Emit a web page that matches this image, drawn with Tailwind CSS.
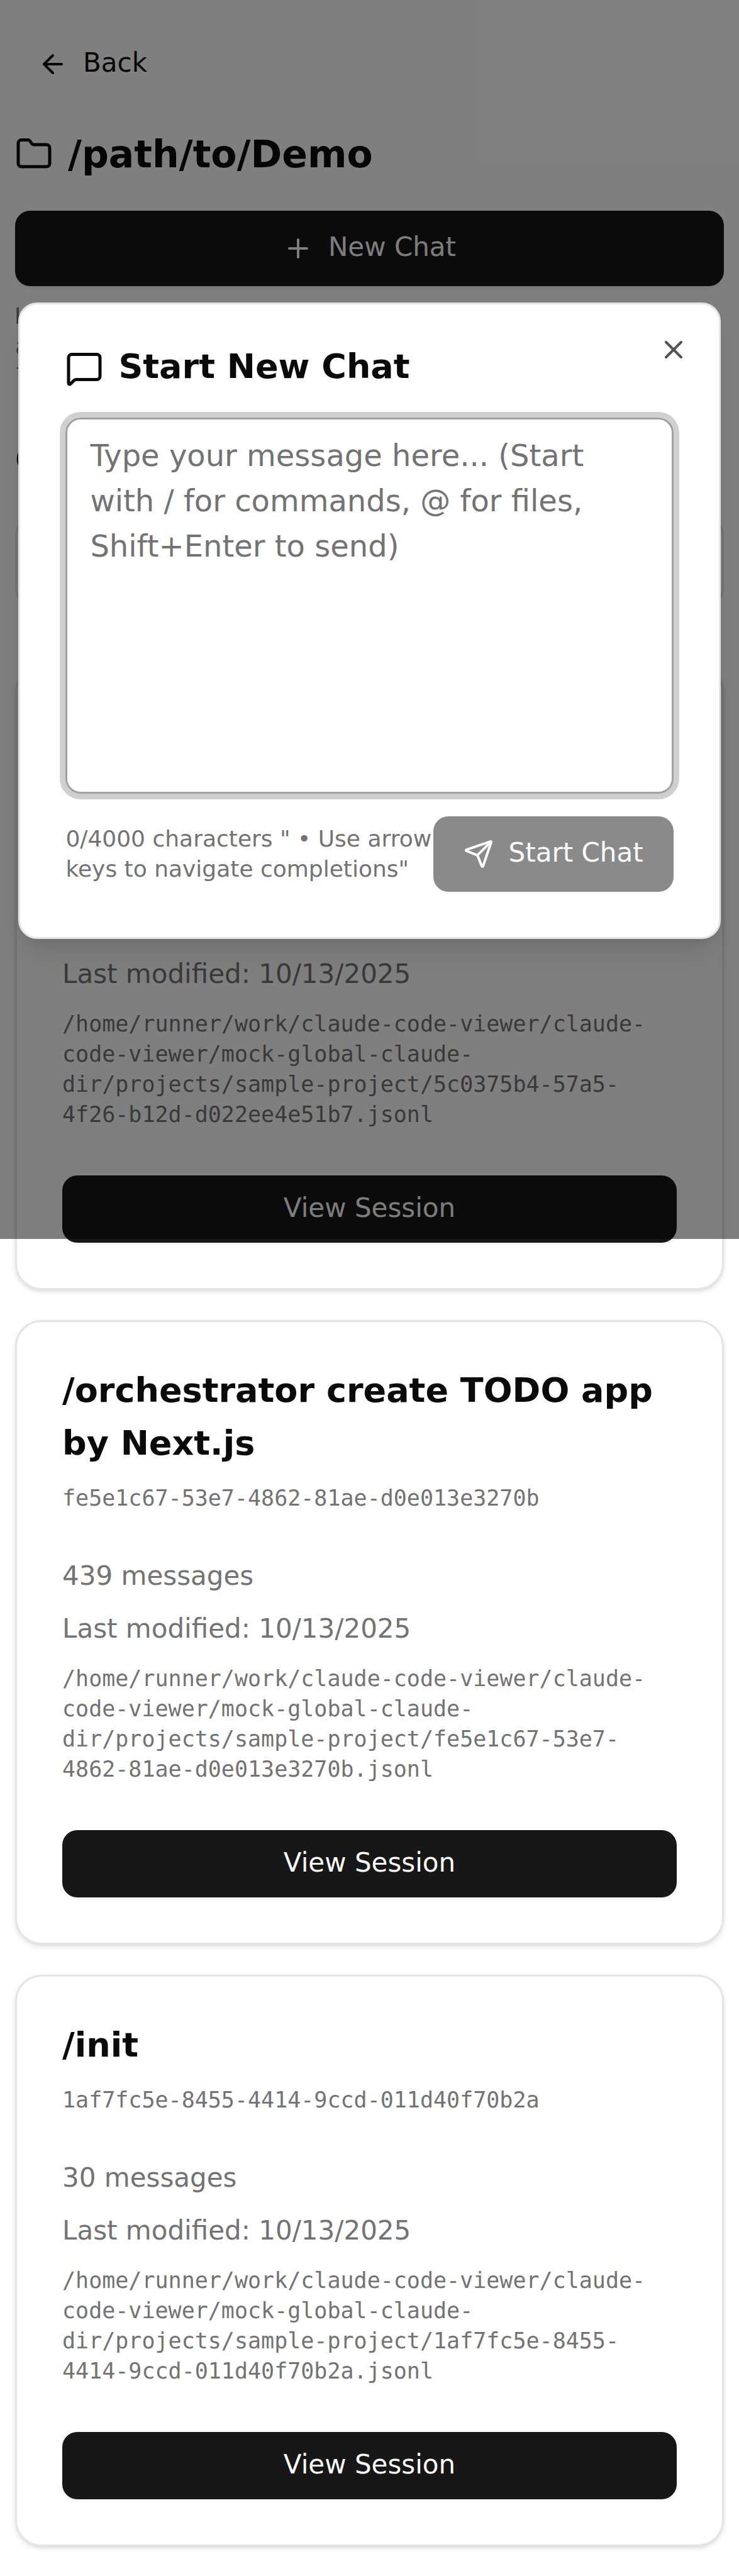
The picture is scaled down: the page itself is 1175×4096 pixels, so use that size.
<!DOCTYPE html>
<html lang="en">
<head>
<meta charset="utf-8">
<meta name="viewport" content="width=device-width, initial-scale=1">
<title>/path/to/Demo</title>
<script src="https://cdn.jsdelivr.net/npm/@tailwindcss/browser@4"></script>
</head>
<body class="relative bg-white font-['DejaVu_Sans',sans-serif] text-[42px] leading-[60px] text-[#0a0a0a]">

<main class="px-6 pt-12 pb-12">
  <header>
    <a href="#" class="flex h-[107px] w-fit items-center gap-6 px-9">
      <svg class="size-12" viewBox="0 0 24 24" fill="none" stroke="currentColor" stroke-width="2" stroke-linecap="round" stroke-linejoin="round" aria-hidden="true"><path d="m12 19-7-7 7-7"/><path d="M19 12H5"/></svg>
      <span class="pb-1">Back</span>
    </a>
    <h1 class="mt-12 flex items-center gap-6 text-[60px] leading-[84px] font-bold">
      <svg class="size-[60px]" viewBox="0 0 24 24" fill="none" stroke="currentColor" stroke-width="2" stroke-linecap="round" stroke-linejoin="round" aria-hidden="true"><path d="M20 20a2 2 0 0 0 2-2V8a2 2 0 0 0-2-2h-7.900a2 2 0 0 1-1.690-.900L9.600 3.900A2 2 0 0 0 7.930 3H4a2 2 0 0 0-2 2v13a2 2 0 0 0 2 2Z"/></svg>
      /path/to/Demo
    </h1>
    <button type="button" class="mt-12 flex h-[120px] w-full items-center justify-center gap-6 rounded-3xl bg-[#171717] text-[#fafafa] shadow-[0_3px_6px_rgb(0_0_0/0.05)]">
      <svg class="size-12" viewBox="0 0 24 24" fill="none" stroke="currentColor" stroke-width="2" stroke-linecap="round" stroke-linejoin="round" aria-hidden="true"><path d="M5 12h14"/><path d="M12 5v14"/></svg>
      <span class="pb-1">New Chat</span>
    </button>
    <p class="mt-6 font-['DejaVu_Sans_Mono',monospace] text-[35px] leading-[48px] break-all text-[#737373]">History File: /home/runner/work/claude-code-viewer/cl<wbr>aude-code-viewer/mock-global-claude-dir/projects/samp<wbr>le-project</p>
  </header>

  <h2 class="mt-[66px] text-[54px] leading-[84px] font-bold">Conversations (3)</h2>
  <button type="button" class="mt-12 flex h-[144px] w-full items-center rounded-[30px] border-[3px] border-[#e5e5e5] px-9">Filters</button>

  <section class="mt-[93px] flex flex-col gap-12">
    <article class="rounded-[42px] border-[3px] border-[#e5e5e5] bg-white px-[72px] pt-[67px] pb-[72px] shadow-[0_3px_9px_rgb(0_0_0/0.1),0_3px_6px_-3px_rgb(0_0_0/0.1)]">
      <h3 class="text-[54px] leading-[84px] font-bold">/orchestrator create TODO app by Next.js</h3>
      <p class="mt-[21px] font-['DejaVu_Sans_Mono',monospace] text-[35px] leading-[48px] text-[#737373]">5c0375b4-57a5-4f26-b12d-d022ee4e51b7</p>
      <p class="mt-[70px] text-[#737373]">60 messages</p>
      <p class="mt-6 text-[#737373]">Last modified: 10/13/2025</p>
      <p class="mt-[25px] font-['DejaVu_Sans_Mono',monospace] text-[35px] leading-[48px] text-[#737373]">/home/runner/work/claude-code-viewer/claude-<wbr>code-viewer/mock-global-claude-<br>dir/projects/sample-project/5c0375b4-57a5-<wbr>4f26-b12d-d022ee4e51b7.jsonl</p>
      <a href="#" class="mt-[73px] flex h-[107px] items-center justify-center rounded-3xl bg-[#171717] text-[#fafafa] shadow-[0_3px_6px_rgb(0_0_0/0.05)]"><span class="pb-1">View Session</span></a>
    </article>

    <article class="rounded-[42px] border-[3px] border-[#e5e5e5] bg-white px-[72px] pt-[67px] pb-[72px] shadow-[0_3px_9px_rgb(0_0_0/0.1),0_3px_6px_-3px_rgb(0_0_0/0.1)]">
      <h3 class="text-[54px] leading-[84px] font-bold">/orchestrator create TODO app by Next.js</h3>
      <p class="mt-[21px] font-['DejaVu_Sans_Mono',monospace] text-[35px] leading-[48px] text-[#737373]">fe5e1c67-53e7-4862-81ae-d0e013e3270b</p>
      <p class="mt-[70px] text-[#737373]">439 messages</p>
      <p class="mt-6 text-[#737373]">Last modified: 10/13/2025</p>
      <p class="mt-[25px] font-['DejaVu_Sans_Mono',monospace] text-[35px] leading-[48px] text-[#737373]">/home/runner/work/claude-code-viewer/claude-<wbr>code-viewer/mock-global-claude-<br>dir/projects/sample-project/fe5e1c67-53e7-<wbr>4862-81ae-d0e013e3270b.jsonl</p>
      <a href="#" class="mt-[73px] flex h-[107px] items-center justify-center rounded-3xl bg-[#171717] text-[#fafafa] shadow-[0_3px_6px_rgb(0_0_0/0.05)]"><span class="pb-1">View Session</span></a>
    </article>

    <article class="rounded-[42px] border-[3px] border-[#e5e5e5] bg-white px-[72px] pt-[67px] pb-[72px] shadow-[0_3px_9px_rgb(0_0_0/0.1),0_3px_6px_-3px_rgb(0_0_0/0.1)]">
      <h3 class="text-[54px] leading-[84px] font-bold">/init</h3>
      <p class="mt-[21px] font-['DejaVu_Sans_Mono',monospace] text-[35px] leading-[48px] text-[#737373]">1af7fc5e-8455-4414-9ccd-011d40f70b2a</p>
      <p class="mt-[70px] text-[#737373]">30 messages</p>
      <p class="mt-6 text-[#737373]">Last modified: 10/13/2025</p>
      <p class="mt-[25px] font-['DejaVu_Sans_Mono',monospace] text-[35px] leading-[48px] text-[#737373]">/home/runner/work/claude-code-viewer/claude-<wbr>code-viewer/mock-global-claude-<br>dir/projects/sample-project/1af7fc5e-8455-<wbr>4414-9ccd-011d40f70b2a.jsonl</p>
      <a href="#" class="mt-[73px] flex h-[107px] items-center justify-center rounded-3xl bg-[#171717] text-[#fafafa] shadow-[0_3px_6px_rgb(0_0_0/0.05)]"><span class="pb-1">View Session</span></a>
    </article>
  </section>
</main>

<!-- Backdrop covers the first screen; the dialog sits at its centre -->
<div class="absolute inset-x-0 top-0 flex h-[1970px] items-center justify-center bg-black/50 pt-1">
  <div role="dialog" aria-modal="true" aria-labelledby="dialog-title" class="relative w-[95%] rounded-[30px] border-[3px] border-[#e5e5e5] bg-white p-[72px] shadow-[0_30px_45px_-9px_rgb(0_0_0/0.1),0_12px_18px_-12px_rgb(0_0_0/0.1)]">
    <h2 id="dialog-title" class="flex items-start gap-6 text-[54px] leading-[54px] font-bold">
      <svg class="size-[60px]" viewBox="0 0 24 24" fill="none" stroke="currentColor" stroke-width="2" stroke-linecap="round" stroke-linejoin="round" aria-hidden="true"><path d="M22 17a2 2 0 0 1-2 2H6.828a2 2 0 0 0-1.414.586l-2.202 2.202A.71.71 0 0 1 2 21.286V5a2 2 0 0 1 2-2h16a2 2 0 0 1 2 2z"/></svg>
      Start New Chat
    </h2>
    <form class="mt-12">
      <textarea aria-label="Message" placeholder="Type your message here... (Start with / for commands, @ for files, Shift+Enter to send)" class="block h-[598px] w-full resize-none rounded-3xl border-[3px] border-[#a1a1a1] px-9 py-[21px] text-5xl leading-[72px] shadow-[0_0_0_9px_rgb(161_161_161/0.5),0_3px_6px_rgb(0_0_0/0.05)] outline-none placeholder:text-[#737373]"></textarea>
      <div class="mt-9 flex items-center justify-between">
        <p class="flex-1 text-4xl leading-[48px] text-[#737373]">0/4000 characters " • Use arrow keys to navigate completions"</p>
        <button type="submit" disabled class="flex h-[120px] shrink-0 items-center gap-6 rounded-3xl bg-[#171717] px-12 text-[#fafafa] opacity-50 shadow-[0_3px_6px_rgb(0_0_0/0.05)]">
          <svg class="size-12" viewBox="0 0 24 24" fill="none" stroke="currentColor" stroke-width="2" stroke-linecap="round" stroke-linejoin="round" aria-hidden="true"><path d="M14.536 21.686a.5.5 0 0 0 .937-.024l6.500-19a.496.496 0 0 0-.635-.635l-19 6.500a.5.5 0 0 0-.024.937l7.930 3.180a2 2 0 0 1 1.112 1.110z"/><path d="m21.854 2.147-10.940 10.939"/></svg>
          <span class="pb-1">Start Chat</span>
        </button>
      </div>
    </form>
    <button type="button" aria-label="Close" class="absolute top-12 right-12 opacity-70">
      <svg class="size-12" viewBox="0 0 24 24" fill="none" stroke="currentColor" stroke-width="2" stroke-linecap="round" stroke-linejoin="round" aria-hidden="true"><path d="M18 6 6 18"/><path d="m6 6 12 12"/></svg>
    </button>
  </div>
</div>
</body>
</html>
